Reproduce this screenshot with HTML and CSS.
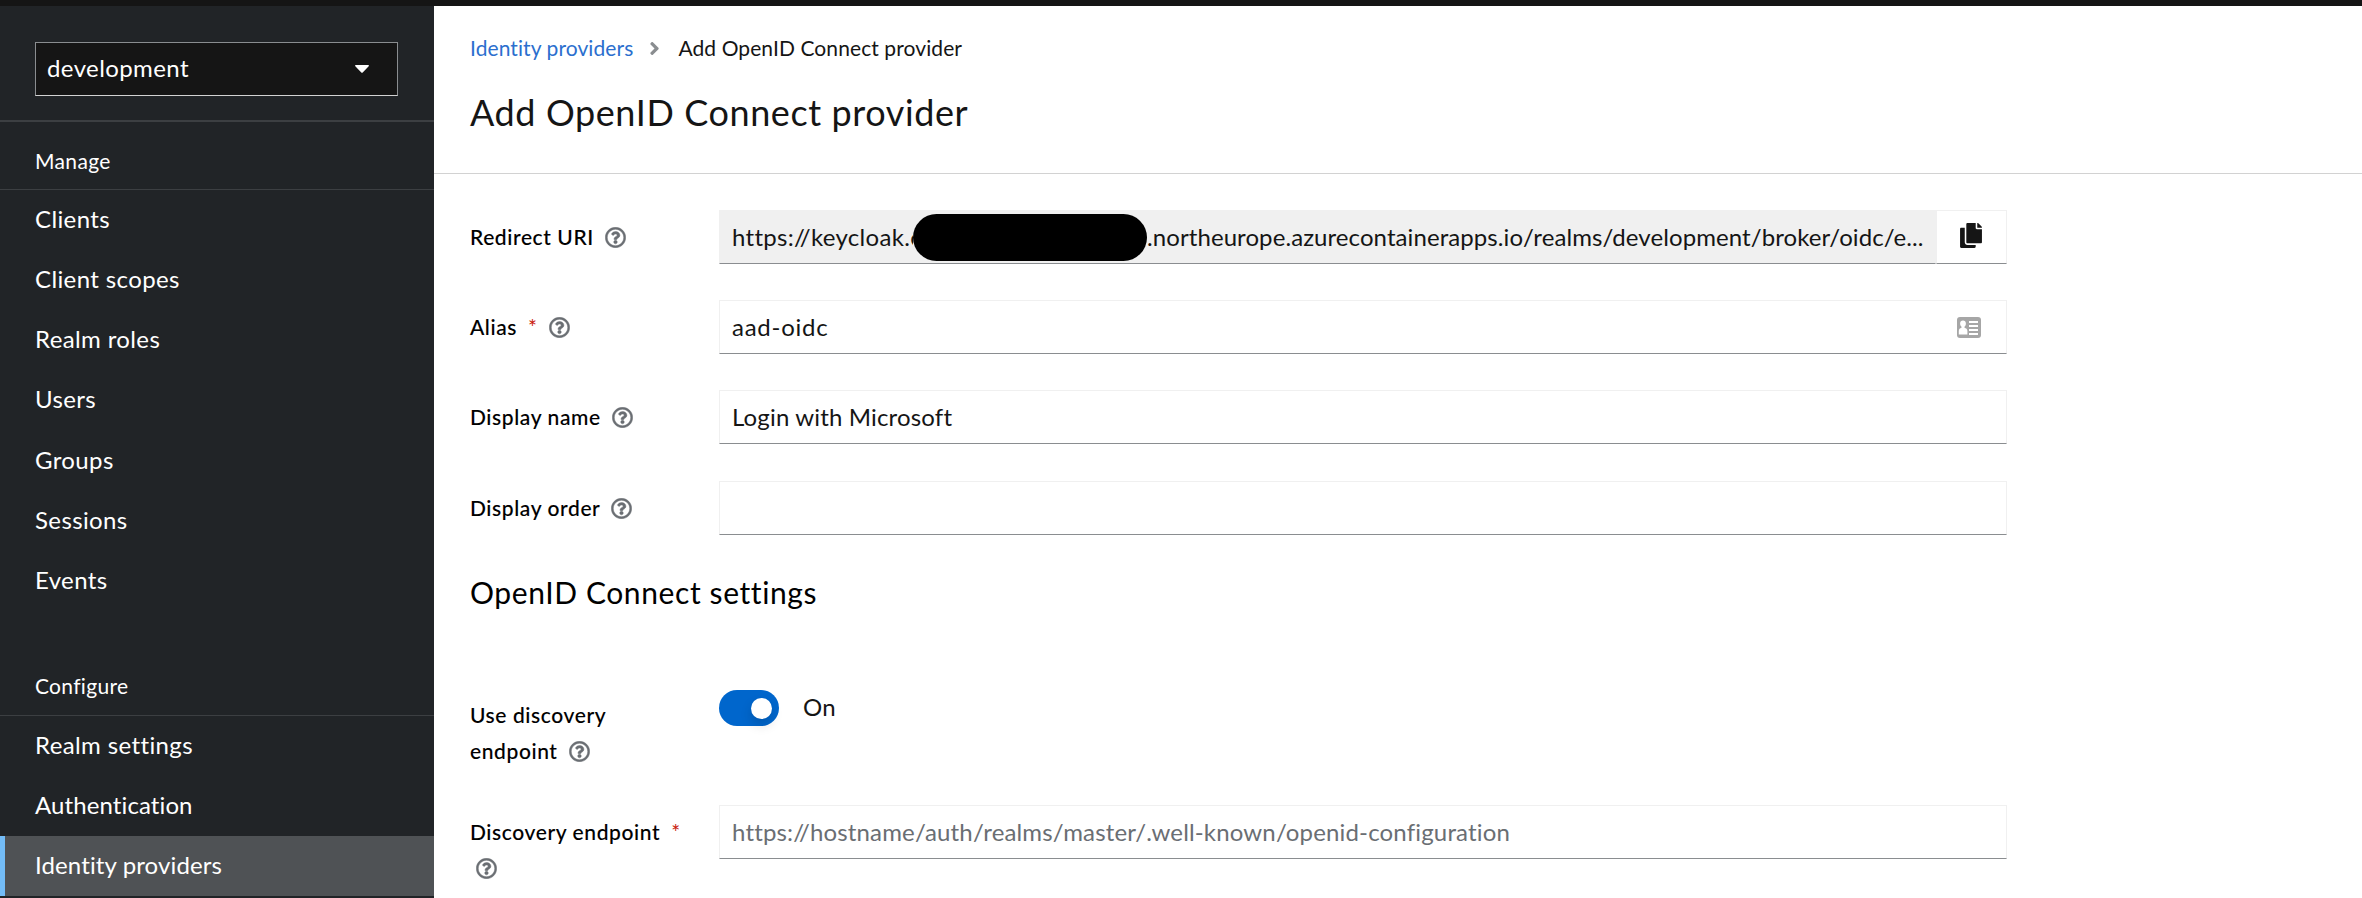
FILE: index.html
```html
<!DOCTYPE html>
<html lang="en">
<head>
<meta charset="utf-8">
<title>Add OpenID Connect provider</title>
<link rel="stylesheet" href="styles.css">
</head>
<body>
<svg class="defs" aria-hidden="true">
  <symbol id="help" viewBox="0 0 512 512"><path d="M256 8C119.043 8 8 119.083 8 256c0 136.997 111.043 248 248 248s248-111.003 248-248C504 119.083 392.957 8 256 8zm0 448c-110.532 0-200-89.431-200-200 0-110.495 89.472-200 200-200 110.491 0 200 89.471 200 200 0 110.530-89.431 200-200 200zm107.244-255.200c0 67.052-72.421 68.084-72.421 92.863V300c0 6.627-5.373 12-12 12h-45.647c-6.627 0-12-5.373-12-12v-8.659c0-35.745 27.100-50.034 47.579-61.516 17.561-9.845 28.324-16.541 28.324-29.579 0-17.246-21.999-28.693-39.784-28.693-23.189 0-33.894 10.977-48.942 29.969-4.057 5.120-11.460 6.071-16.666 2.124l-27.824-21.098c-5.107-3.872-6.251-11.066-2.644-16.363C184.846 131.491 214.940 112 261.794 112c49.071 0 101.450 38.304 101.450 88.800zM298 368c0 23.159-18.841 42-42 42s-42-18.841-42-42 18.841-42 42-42 42 18.841 42 42z"/></symbol>
</svg>
<div class="topbar"></div>
<div class="page">
  <nav class="sidebar">
    <div class="realm">
      <button class="realm-select"><span>development</span><svg width="14" height="8" viewBox="0 0 14 8"><path d="M.8 0h12.4c.8 0 1 .7.5 1.200L7.700 7.400c-.4.4-1 .4-1.400 0L.3 1.200C-.2.7 0 0 .8 0z"/></svg></button>
    </div>
    <h2 class="nav-title manage">Manage</h2>
    <ul class="nav-list">
      <li>Clients</li>
      <li>Client scopes</li>
      <li>Realm roles</li>
      <li>Users</li>
      <li class="step">Groups</li>
      <li>Sessions</li>
      <li>Events</li>
    </ul>
    <h2 class="nav-title configure">Configure</h2>
    <ul class="nav-list">
      <li>Realm settings</li>
      <li class="tight">Authentication</li>
      <li class="current">Identity providers</li>
    </ul>
  </nav>
  <main class="main">
    <header class="page-header">
      <div class="breadcrumb">
        <a>Identity providers</a>
        <svg width="11" height="21" viewBox="0 0 256 512"><path d="M224.300 273l-136 136c-9.400 9.400-24.600 9.400-33.900 0l-22.600-22.600c-9.400-9.400-9.400-24.600 0-33.900l96.400-96.400-96.400-96.400c-9.400-9.400-9.400-24.600 0-33.900L54.300 103c9.400-9.400 24.600-9.400 33.900 0l136 136c9.500 9.400 9.500 24.600.1 34z"/></svg>
        <span>Add OpenID Connect provider</span>
      </div>
      <h1>Add OpenID Connect provider</h1>
    </header>
    <form class="form">
      <div class="row">
        <label>Redirect URI<svg class="help"><use href="#help"/></svg></label>
        <div class="copy-group">
          <div class="readonly"><span class="host">https://keycloak.c</span><span class="redacted"></span><span class="path">.northeurope.azurecontainerapps.io/realms/development/broker/oidc/e...</span></div>
          <div class="copy"><svg width="22" height="25" viewBox="0 0 448 512"><path d="M320 448v40c0 13.255-10.745 24-24 24H24c-13.255 0-24-10.745-24-24V120c0-13.255 10.745-24 24-24h72v296c0 30.879 25.121 56 56 56h168zm0-344V0H152c-13.255 0-24 10.745-24 24v368c0 13.255 10.745 24 24 24h272c13.255 0 24-10.745 24-24V128H344c-13.200 0-24-10.800-24-24zm120.971-31.029L375.029 7.029A24 24 0 0 0 358.059 0H352v96h96v-6.059a24 24 0 0 0-7.029-16.970z"/></svg></div>
        </div>
      </div>
      <div class="row">
        <label>Alias<i>*</i><svg class="help"><use href="#help"/></svg></label>
        <div class="input"><span class="alias">aad-oidc</span>
          <svg width="24" height="21" viewBox="0 0 24 21"><rect width="24" height="21" rx="3" fill="#a6a6a6"/><path fill="#fff" d="M6 3.500c1.800 0 2.900 1.300 2.900 3.100 0 1.500-.6 2.500-1.400 3.100v1.100c1.700.4 2.900 1.300 2.900 3.200v3.500H1.800V14c0-1.900 1.100-2.800 2.700-3.200V9.700C3.700 9.100 3.100 8.100 3.100 6.600c0-1.800 1.100-3.100 2.900-3.100zM12 4h9v2h-9zM12 8h9v2h-9zM12 12h9v2h-9zM12 16h9v2h-9z"/></svg>
        </div>
      </div>
      <div class="row">
        <label>Display name<svg class="help"><use href="#help"/></svg></label>
        <div class="input"><span>Login with Microsoft</span></div>
      </div>
      <div class="row last">
        <label>Display order<svg class="help"><use href="#help"/></svg></label>
        <div class="input"></div>
      </div>
      <h2>OpenID Connect settings</h2>
      <div class="row switch-row">
        <label>Use discovery<br>endpoint<svg class="help"><use href="#help"/></svg></label>
        <div class="switch"><span class="track"><span class="knob"></span></span><span class="state">On</span></div>
      </div>
      <div class="row">
        <label>Discovery endpoint<i>*</i><br><svg class="help wrapped"><use href="#help"/></svg></label>
        <div class="input placeholder"><span>https://hostname/auth/realms/master/.well-known/openid-configuration</span></div>
      </div>
    </form>
  </main>
</div>
</body>
</html>
```
FILE: styles.css
```css
* { box-sizing: border-box; }
body {
  margin: 0;
  height: 898px;
  overflow: hidden;
  display: flex;
  flex-direction: column;
  background: #fff;
  color: #151515;
  font: 24px/36px Lato, "Liberation Sans", sans-serif;
}
h1, h2, ul { margin: 0; padding: 0; font-weight: 400; list-style: none; }
svg { display: block; flex: none; }
.defs { position: absolute; width: 0; height: 0; }
.topbar { height: 6px; flex: none; background: #151515; }
.page { display: flex; flex: 1; min-height: 0; }

.sidebar { width: 434px; flex: none; background: #212427; color: #fff; }
.realm { height: 116px; padding: 36px 36px 0 35px; border-bottom: 2px solid #3c3f42; }
.realm-select {
  width: 100%;
  height: 54px;
  display: flex;
  align-items: center;
  justify-content: space-between;
  padding: 0 28px 0 11px;
  border: 1px solid #8a8d90;
  border-bottom-color: #d2d2d2;
  background: #151515;
  color: #fff;
  font: inherit;
  letter-spacing: .4px;
}
.realm-select span { padding-bottom: 2px; }
.realm-select svg { fill: #fff; }
.nav-title {
  padding: 0 35px;
  border-bottom: 1px solid #3c3f42;
  font-size: 21px;
  line-height: 30px;
  letter-spacing: .35px;
}
.manage { height: 68px; padding-top: 24px; }
.configure { height: 105px; padding-top: 60px; letter-spacing: .3px; }
.nav-list li { height: 60px; padding-left: 35px; line-height: 58px; letter-spacing: .38px; }
.nav-list .step { margin-top: 1px; }
.nav-list .tight { letter-spacing: .1px; }
.nav-list .current { padding-left: 30px; border-left: 5px solid #73bcf7; background: #4f5255; letter-spacing: .12px; }

.main { flex: 1; }
.page-header { height: 168px; padding: 24px 36px 0; border-bottom: 1px solid #d2d2d2; }
.breadcrumb { display: flex; align-items: center; height: 36px; font-size: 21px; letter-spacing: .09px; }
.breadcrumb a { color: #2b6fce; }
.breadcrumb svg { margin: 0 18px 0 16px; fill: #8a8d90; }
h1 { margin-top: 19px; font-size: 36px; line-height: 54px; letter-spacing: .6px; }

.form { padding: 36px 36px 0; }
.row { display: grid; grid-template-columns: 249px 1288px; grid-template-rows: 54px; height: 54px; margin-bottom: 36px; }
.row.last { margin-top: 37px; margin-bottom: 0; }
.row label {
  padding-top: 9px;
  color: #000;
  font-size: 21px;
  font-weight: 500;
  letter-spacing: .6px;
  -webkit-text-stroke: .1px #000;
}
.row i { margin-left: 11px; color: #c9190b; font-style: normal; font-weight: 400; -webkit-text-stroke: 0; }
.help {
  display: inline-block;
  width: 21px;
  height: 21px;
  margin-left: 11px;
  vertical-align: -3px;
  fill: #6a6e73;
  stroke: #6a6e73;
  stroke-width: 12px;
}
.help.wrapped { margin-left: 6px; }

.input, .readonly, .copy { display: flex; align-items: center; border: 1px solid #f0f0f0; border-bottom-color: #8a8d90; }
.input { justify-content: space-between; padding: 0 25px 0 12px; letter-spacing: .16px; }
.alias { letter-spacing: .75px; }
.placeholder { color: #6a6e73; }
.copy-group { display: flex; }
.readonly { width: 1217px; padding-left: 12px; background: #f0f0f0; white-space: nowrap; }
.host { width: 181px; overflow: hidden; letter-spacing: .3px; }
.redacted { width: 234px; height: 47px; border-radius: 24px; background: #000; }
.path { letter-spacing: .08px; }
.copy { flex: 1; padding: 0 0 3px 23px; fill: #151515; }

.form h2 { margin-top: 38px; color: #000; font-size: 30px; line-height: 39px; letter-spacing: .6px; }
.switch-row { height: 81px; margin-top: 76px; }
.switch { display: flex; align-items: center; height: 36px; margin-top: 2px; letter-spacing: .2px; }
.state { padding-bottom: 2px; }
.track { width: 60px; height: 36px; margin-right: 24px; padding: 7.5px; border-radius: 18px; background: #06c; }
.knob { display: block; width: 21px; height: 21px; margin-left: auto; border-radius: 50%; background: #fff; box-shadow: 0 6px 12px rgba(3, 3, 3, .15); }
```
